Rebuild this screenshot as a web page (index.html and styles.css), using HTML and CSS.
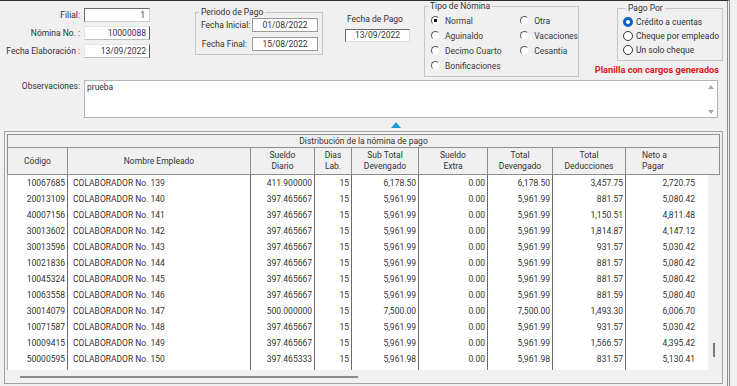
FILE: index.html
```html
<!DOCTYPE html>
<html lang="es">
<head>
<meta charset="utf-8">
<title>Planilla</title>
<link rel="stylesheet" href="styles.css">
</head>
<body>
<div class="window">
  <div class="top">
    <div class="ident">
      <label>Filial:</label><div class="inp inp-a">1</div>
      <label>Nómina No. :</label><div class="inp inp-b">10000088</div>
      <label>Fecha Elaboración :</label><div class="inp inp-b">13/09/2022</div>
    </div>

    <fieldset class="periodo">
      <legend>Periodo de Pago</legend>
      <div class="pgrid">
        <label>Fecha Inicial:</label><div class="inp inp-c">01/08/2022</div>
        <label>Fecha Final:</label><div class="inp inp-c">15/08/2022</div>
      </div>
    </fieldset>

    <div class="fpago">
      <div class="fpago-label">Fecha de Pago</div>
      <div class="inp inp-d">13/09/2022</div>
    </div>

    <fieldset class="tipo">
      <legend>Tipo de Nómina</legend>
      <div class="tipo-cols">
        <div class="tcol tcol-l">
          <div class="radio"><span class="rc on"></span>Normal</div>
          <div class="radio"><span class="rc"></span>Aguinaldo</div>
          <div class="radio"><span class="rc"></span>Decimo Cuarto</div>
          <div class="radio"><span class="rc"></span>Bonificaciones</div>
        </div>
        <div class="tcol">
          <div class="radio"><span class="rc"></span>Otra</div>
          <div class="radio"><span class="rc"></span>Vacaciones</div>
          <div class="radio"><span class="rc"></span>Cesantia</div>
        </div>
      </div>
    </fieldset>

    <div class="pago-col">
      <fieldset class="pago">
        <legend>Pago Por</legend>
        <div class="radio2"><span class="rm on"></span>Crédito a cuentas</div>
        <div class="radio2"><span class="rm"></span>Cheque por empleado</div>
        <div class="radio2"><span class="rm"></span>Un solo cheque</div>
      </fieldset>
      <div class="alerta">Planilla con cargos generados</div>
    </div>
  </div>

  <div class="obs">
    <label class="obs-label">Observaciones:</label>
    <div class="ta">
      <div class="ta-text">prueba</div>
      <div class="ta-sb"><span class="arr-up"></span><span class="arr-down"></span></div>
    </div>
  </div>

  <div class="splitter"><span class="tri"></span></div>

  <div class="grid">
    <div class="gtitle">Distribución de la nómina de pago</div>
    <div class="ghead">
      <div>Código</div>
      <div>Nombre Empleado</div>
      <div>Sueldo<br>Diario</div>
      <div>Dias<br>Lab.</div>
      <div>Sub Total<br>Devengado</div>
      <div>Sueldo<br>Extra</div>
      <div>Total<br>Devengado</div>
      <div>Total<br>Deducciones</div>
      <div class="h-neto">Neto a<br>Pagar</div>
    </div>
    <div class="gbody">
      <div class="rows">
        <div class="row"><span>10067685</span><span>COLABORADOR No. 139</span><span>411.900000</span><span>15</span><span>6,178.50</span><span>0.00</span><span>6,178.50</span><span>3,457.75</span><span>2,720.75</span></div>
        <div class="row"><span>20013109</span><span>COLABORADOR No. 140</span><span>397.465667</span><span>15</span><span>5,961.99</span><span>0.00</span><span>5,961.99</span><span>881.57</span><span>5,080.42</span></div>
        <div class="row"><span>40007156</span><span>COLABORADOR No. 141</span><span>397.465667</span><span>15</span><span>5,961.99</span><span>0.00</span><span>5,961.99</span><span>1,150.51</span><span>4,811.48</span></div>
        <div class="row"><span>30013602</span><span>COLABORADOR No. 142</span><span>397.465667</span><span>15</span><span>5,961.99</span><span>0.00</span><span>5,961.99</span><span>1,814.87</span><span>4,147.12</span></div>
        <div class="row"><span>30013596</span><span>COLABORADOR No. 143</span><span>397.465667</span><span>15</span><span>5,961.99</span><span>0.00</span><span>5,961.99</span><span>931.57</span><span>5,030.42</span></div>
        <div class="row"><span>10021836</span><span>COLABORADOR No. 144</span><span>397.465667</span><span>15</span><span>5,961.99</span><span>0.00</span><span>5,961.99</span><span>881.57</span><span>5,080.42</span></div>
        <div class="row"><span>10045324</span><span>COLABORADOR No. 145</span><span>397.465667</span><span>15</span><span>5,961.99</span><span>0.00</span><span>5,961.99</span><span>881.57</span><span>5,080.42</span></div>
        <div class="row"><span>10063558</span><span>COLABORADOR No. 146</span><span>397.465667</span><span>15</span><span>5,961.99</span><span>0.00</span><span>5,961.99</span><span>881.59</span><span>5,080.40</span></div>
        <div class="row"><span>30014079</span><span>COLABORADOR No. 147</span><span>500.000000</span><span>15</span><span>7,500.00</span><span>0.00</span><span>7,500.00</span><span>1,493.30</span><span>6,006.70</span></div>
        <div class="row"><span>10071587</span><span>COLABORADOR No. 148</span><span>397.465667</span><span>15</span><span>5,961.99</span><span>0.00</span><span>5,961.99</span><span>931.57</span><span>5,030.42</span></div>
        <div class="row"><span>10009415</span><span>COLABORADOR No. 149</span><span>397.465667</span><span>15</span><span>5,961.99</span><span>0.00</span><span>5,961.99</span><span>1,566.57</span><span>4,395.42</span></div>
        <div class="row"><span>50000595</span><span>COLABORADOR No. 150</span><span>397.465333</span><span>15</span><span>5,961.98</span><span>0.00</span><span>5,961.98</span><span>831.57</span><span>5,130.41</span></div>
        <div class="row fill"><span></span><span></span><span></span><span></span><span></span><span></span><span></span><span></span><span></span></div>
      </div>
      <div class="vscroll"><span class="vthumb"></span></div>
    </div>
    <div class="hscroll"><span class="hthumb"></span></div>
  </div>
</div>
</body>
</html>
```

FILE: styles.css
```css
* { box-sizing: border-box; }

body {
  margin: 0;
  background: #f0f0f0;
  font-family: Roboto, "Liberation Sans", Arial, sans-serif;
  font-size: 8.5px;
  color: #333;
}

.window {
  width: 730px;
  height: 386px;
  border-top: 1px solid #2e2e2e;
  border-right: 3px double #8e8e8e;
}

/* ---------- top area ---------- */
.top {
  display: flex;
  align-items: flex-start;
  height: 79px;
}

.ident {
  display: grid;
  grid-template-columns: 80px 66px;
  column-gap: 4px;
  row-gap: 4px;
  margin-top: 7px;
}
.ident label {
  text-align: right;
  line-height: 14px;
  white-space: nowrap;
}

.inp {
  background: #fff;
  height: 14px;
  line-height: 12px;
  border: 1px solid #a0a0a0;
  white-space: nowrap;
}
.inp-a {
  border-color: #6a6a6a #cfcfcf #cfcfcf #6a6a6a;
  text-align: right;
  padding-right: 4px;
}
.inp-b {
  border-color: #e4e4e4 #5a5a5a #bdbdbd #e4e4e4;
  text-align: right;
  padding-right: 3px;
}
.inp-c {
  border-color: #9c9c9c;
  text-align: center;
}
.inp-d {
  width: 65px;
  height: 13px;
  line-height: 11px;
  border-color: #6a6a6a #dcdcdc #dcdcdc #6a6a6a;
  text-align: center;
  margin-top: 5px;
}

fieldset {
  margin: 0;
  padding: 0;
  min-width: 0;
  border: 1px solid #c6c6c6;
}
legend {
  padding: 0 2px;
  margin-left: 3px;
  line-height: 10px;
}

.periodo {
  margin-left: 45px;
  margin-top: 6px;
  width: 128px;
}
.pgrid {
  display: grid;
  grid-template-columns: 46px 66px;
  column-gap: 5px;
  row-gap: 5px;
  padding: 1px 4px 3px 5px;
}
.pgrid label {
  line-height: 14px;
  text-align: right;
  white-space: nowrap;
}

.fpago {
  margin-left: 22px;
  margin-top: 13px;
}
.fpago-label {
  line-height: 10px;
  padding-left: 2px;
}

.tipo {
  margin-left: 14px;
  width: 155px;
  height: 76px;
}
.tipo-cols {
  display: flex;
  padding: 2px 0 3px 6px;
}
.tcol {
  display: flex;
  flex-direction: column;
}
.tcol-l { width: 93px; }
.radio {
  height: 15px;
  display: flex;
  align-items: center;
  gap: 5px;
  white-space: nowrap;
  color: #3a3a3a;
}
.rc {
  flex: none;
  width: 9px;
  height: 9px;
  border-radius: 50%;
  border: 1px solid;
  border-color: #5e5e5e #f4f4f4 #f4f4f4 #5e5e5e;
  background: #fff;
}
.rc.on {
  background: radial-gradient(circle, #111 0 1.4px, #fff 2px);
}

.pago-col {
  margin-left: auto;
  margin-right: 4px;
  margin-top: 2px;
  display: flex;
  flex-direction: column;
  align-items: flex-end;
}
.pago {
  width: 106px;
  padding: 2px 0 3px 5px;
}
.radio2 {
  height: 14px;
  display: flex;
  align-items: center;
  gap: 3px;
  white-space: nowrap;
}
.rm {
  flex: none;
  width: 10px;
  height: 10px;
  border-radius: 50%;
  border: 1px solid #333;
  background: #fff;
}
.rm.on {
  border: 3px solid #0a62c4;
}
.alerta {
  margin-top: 4px;
  margin-right: 4px;
  line-height: 10px;
  font-size: 9.2px;
  font-weight: bold;
  color: #e0161c;
  white-space: nowrap;
}

/* ---------- observaciones ---------- */
.obs {
  display: flex;
  gap: 4px;
}
.obs-label {
  width: 80px;
  text-align: right;
  line-height: 12px;
}
.ta {
  width: 634px;
  height: 38px;
  border: 1px solid #b4b4b4;
  background: #fff;
  display: flex;
}
.ta-text {
  flex: 1;
  padding: 1px 2px;
  line-height: 10px;
}
.ta-sb {
  width: 13px;
  display: flex;
  flex-direction: column;
  justify-content: space-between;
  align-items: center;
  padding: 4px 0 3px;
}
.arr-up, .arr-down {
  width: 0;
  height: 0;
  border-left: 3px solid transparent;
  border-right: 3px solid transparent;
}
.arr-up { border-bottom: 4px solid #a8a8a8; }
.arr-down { border-top: 4px solid #a8a8a8; }

.splitter {
  height: 13px;
  display: flex;
  justify-content: flex-start;
  padding: 4px 0 0 391px;
}
.tri {
  width: 0;
  height: 0;
  border-left: 5px solid transparent;
  border-right: 5px solid transparent;
  border-bottom: 6px solid #1d9bd7;
}

/* ---------- grid ---------- */
.grid {
  margin-left: 4px;
  width: 719px;
  height: 253px;
  border: 1px solid #a2a2a2;
  padding: 2px 2px 0 2px;
  display: flex;
  flex-direction: column;
}
.gtitle {
  height: 14px;
  line-height: 12px;
  border: 1px solid #8e8e8e;
  text-align: center;
  white-space: nowrap;
}
.ghead {
  display: grid;
  grid-template-columns: 61px 183px 64px 37px 67px 69px 65px 73px 94px;
  height: 27px;
}
.ghead > div {
  display: flex;
  align-items: center;
  justify-content: center;
  text-align: center;
  line-height: 11px;
  border-right: 1px solid #8e8e8e;
  border-bottom: 1px solid #8e8e8e;
  white-space: nowrap;
}
.ghead > div:first-child { border-left: 1px solid #8e8e8e; }
.ghead > .h-neto {
  justify-content: flex-start;
  text-align: left;
  padding-left: 16px;
}

.gbody {
  display: flex;
  height: 195px;
}
.rows {
  width: 701px;
  background: #fff;
  display: flex;
  flex-direction: column;
  border-left: 1px solid #b0b0b0;
}
.row {
  display: grid;
  grid-template-columns: 60px 183px 64px 37px 67px 69px 65px 73px 82px;
  height: 16px;
  line-height: 16px;
}
.row > span {
  border-right: 1px solid #6a6a6a;
  padding: 0 2px 0 3px;
  text-align: right;
  white-space: nowrap;
  overflow: hidden;
}
.row > span:nth-child(2) {
  text-align: left;
  padding-left: 5px;
}
.row > span:last-child {
  border-right: none;
  padding-right: 13px;
}
.row.fill { flex: 1; }

.vscroll {
  flex: 1;
  display: flex;
  flex-direction: column;
  justify-content: flex-end;
  padding: 0 0 13px 5px;
}
.vthumb {
  width: 2px;
  height: 14px;
  background: #7a7a7a;
}

.hscroll {
  flex: 1;
  padding: 6px 0 0 13px;
}
.hthumb {
  display: block;
  width: 338px;
  height: 2px;
  background: #8a8a8a;
}
```
